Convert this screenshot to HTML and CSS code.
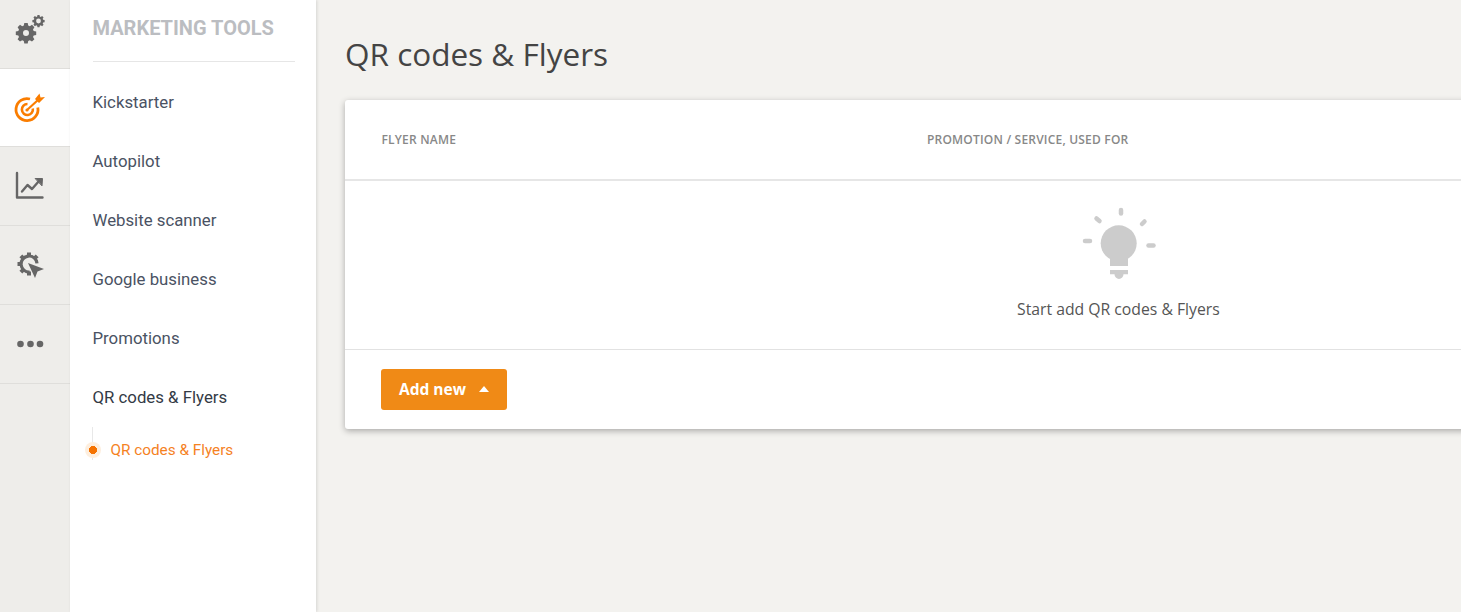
FILE: index.html
```html
<!DOCTYPE html>
<html lang="en">
<head>
<meta charset="utf-8">
<title>QR codes &amp; Flyers</title>
<link rel="stylesheet" href="styles.css">
</head>
<body>
<div class="app">
  <nav class="rail">
    <a class="rail-item rail-first">
      <svg class="icon" width="32" height="32" viewBox="0 0 32 32" fill="#666">
        <g transform="translate(12 15)">
          <path fill-rule="evenodd" d="M-1.7-10h3.4l.5 2.5 1.6.7 2.2-1.4 2.4 2.4-1.4 2.2.7 1.6 2.5.5v3.4l-2.5.5-.7 1.6 1.4 2.2-2.4 2.4-2.2-1.4-1.6.7-.5 2.5h-3.4l-.5-2.5-1.6-.7-2.2 1.4-2.4-2.4 1.4-2.2-.7-1.6-2.5-.5v-3.4l2.5-.5.7-1.6-1.4-2.2 2.4-2.400 2.200 1.400 1.600-.7zM0-3a3 3 0 1 0 0 6 3 3 0 0 0 0-6z"/>
        </g>
        <g transform="translate(24.500 3) scale(.6)">
          <path fill-rule="evenodd" d="M-1.7-10h3.4l.5 2.5 1.6.7 2.2-1.4 2.4 2.4-1.4 2.2.7 1.6 2.5.5v3.4l-2.5.5-.7 1.6 1.4 2.2-2.4 2.4-2.2-1.4-1.6.7-.5 2.5h-3.4l-.5-2.5-1.6-.7-2.2 1.4-2.4-2.4 1.4-2.2-.7-1.6-2.5-.5v-3.4l2.5-.5.7-1.6-1.4-2.2 2.4-2.400 2.200 1.400 1.600-.7zM0-4a4 4 0 1 0 0 8 4 4 0 0 0 0-8z"/>
        </g>
      </svg>
    </a>
    <a class="rail-item rail-active">
      <svg class="icon" width="32" height="32" viewBox="0 0 32 32" fill="none" stroke="#fa7d00">
        <path stroke-width="2.800" d="M23.800 15.500A11 11 0 1 1 16 7"/>
        <path stroke-width="2.600" d="M18.800 16.500A5.500 5.500 0 1 1 13.500 12"/>
        <path stroke-width="2.200" d="M13 18 24 8"/>
        <path fill="#fa7d00" stroke="none" d="M21 7 25.500 1.500 26.500 5.500 31 5 25 11z"/>
        <circle cx="13" cy="18" r="1.600" fill="#fa7d00" stroke="none"/>
      </svg>
    </a>
    <a class="rail-item">
      <svg class="icon" width="32" height="32" viewBox="0 0 32 32" fill="none" stroke="#666" stroke-width="2.400" stroke-linecap="round" stroke-linejoin="round">
        <path d="M3 3v24.500H28.500"/>
        <path d="M8 21.500 13.500 15l4.500 4L25 11"/>
        <path fill="#666" stroke-width="1" d="M21.500 8.500h7l-.5 7z"/>
      </svg>
    </a>
    <a class="rail-item">
      <svg class="icon" width="32" height="32" viewBox="0 0 32 32" fill="#666">
        <path d="M15.700 23A8 8 0 1 1 23 14.300" fill="none" stroke="#666" stroke-width="3.200"/>
        <rect x="13" y="3.500" width="4" height="4"/>
        <rect x="13" y="3.500" width="4" height="4" transform="rotate(45 15 15)"/>
        <rect x="13" y="3.500" width="4" height="4" transform="rotate(-45 15 15)"/>
        <rect x="13" y="3.500" width="4" height="4" transform="rotate(-90 15 15)"/>
        <rect x="13" y="3.500" width="4" height="4" transform="rotate(-135 15 15)"/>
        <rect x="13" y="3.500" width="4" height="4" transform="rotate(180 15 15)"/>
        <path d="M14 14 30 20 23.500 22.500 21 29z"/>
      </svg>
    </a>
    <a class="rail-item">
      <svg class="icon" width="28" height="8" viewBox="0 0 28 8" fill="#666">
        <circle cx="4.500" cy="4" r="3.300"/>
        <circle cx="14.500" cy="4" r="3.300"/>
        <circle cx="24" cy="4" r="3.300"/>
      </svg>
    </a>
  </nav>
  <aside class="sidebar">
    <h2 class="side-title">MARKETING TOOLS</h2>
    <ul class="side-list">
      <li class="side-link">Kickstarter</li>
      <li class="side-link">Autopilot</li>
      <li class="side-link">Website scanner</li>
      <li class="side-link">Google business</li>
      <li class="side-link">Promotions</li>
      <li class="side-link side-open">QR codes &amp; Flyers</li>
    </ul>
    <div class="sub-item">
      <span class="sub-line"></span>
      <span class="sub-dot"></span>
      <span>QR codes &amp; Flyers</span>
    </div>
  </aside>
  <main class="main">
    <h1 class="page-title">QR codes &amp; Flyers</h1>
    <section class="card">
      <div class="card-head">
        <div class="col-a">FLYER NAME</div>
        <div class="col-b">PROMOTION / SERVICE, USED FOR</div>
      </div>
      <div class="empty">
        <svg class="bulb" width="74" height="74" viewBox="0 0 74 74" fill="#ccc">
          <circle cx="36.700" cy="36.300" r="18"/>
          <path d="M28 46h18v13H28z"/>
          <path d="M28 63h18v4.300h-4.500a4.500 4.700 0 0 1-9 0H28z"/>
          <g stroke="#ccc" stroke-width="4.500" stroke-linecap="round">
            <path d="M39 3v3.500"/>
            <path d="M14.500 11.500l3 2.500"/>
            <path d="M60 17l2.500-2.500"/>
            <path d="M3 34h5"/>
            <path d="M66.500 38.500h5"/>
          </g>
        </svg>
        <p class="empty-text">Start add QR codes &amp; Flyers</p>
      </div>
      <div class="card-foot">
        <button class="add-btn">Add new<span class="caret"></span></button>
      </div>
    </section>
  </main>
</div>
</body>
</html>
```

FILE: styles.css
```css
* { box-sizing: border-box; }
html, body { margin: 0; height: 100%; overflow: hidden; }
body { background: #f3f2ef; font-family: "Open Sans", sans-serif; }
.app { display: flex; height: 612px; width: 1461px; overflow: hidden; }

.rail { width: 70px; flex: none; background: #eeedea; display: flex; flex-direction: column; }
.rail-item { height: 79px; display: flex; align-items: center; justify-content: center; padding-right: 10px; border-bottom: 1px solid #dfdedb; }
.icon { overflow: visible; }
.rail-first { height: 69px; }
.rail-active { height: 78px; background: #fff; }

.sidebar { width: 246px; flex: none; background: #fff; padding: 0 21px 0 22.500px; box-shadow: 1px 0 3px rgba(0,0,0,.12); font-family: Roboto, sans-serif; z-index: 1; }
.side-title { margin: 0; height: 62px; padding-top: 16px; font-size: 20px; line-height: 24px; font-weight: 700; color: #bbbdc1; border-bottom: 1px solid #e6e6e6; }
.side-list { list-style: none; margin: 0; padding: 11px 0 0; }
.side-link { height: 59px; font-size: 16.800px; line-height: 59px; color: #4a5263; }
.side-open { color: #333a45; }
.sub-item { position: relative; display: flex; align-items: center; height: 24px; margin-top: 11px; padding-left: 18px; font-size: 15.300px; color: #f5821f; }
.sub-line { position: absolute; left: -.5px; top: -11px; width: 1px; height: 33px; background: #e8e8e8; }
.sub-dot { position: absolute; left: -7.500px; top: 3.500px; width: 16px; height: 16px; border-radius: 50%; background: radial-gradient(circle, #f57200 0 3.800px, #fdeede 4.300px); }

.main { flex: 1; min-width: 0; padding: 0 0 0 29px; }
.page-title { margin: 0; height: 100px; padding-top: 32px; font-size: 31.500px; line-height: 43px; font-weight: 400; color: #444; }
.card { width: 1200px; background: #fff; border-radius: 3px; box-shadow: 0 2px 6px rgba(0,0,0,.3); }
.card-head { height: 81px; display: flex; align-items: center; padding: 0 0 0 36.500px; border-bottom: 2px solid #e6e6e6; font-size: 12px; font-weight: 600; color: #888; letter-spacing: .2px; }
.col-a { width: 545.500px; }
.empty { height: 169px; border-bottom: 1px solid #e2e2e2; padding: 26px 0 0 737px; position: relative; }
.bulb { display: block; }
.empty-text { position: absolute; margin: 0; left: 672px; top: 117px; font-size: 15.750px; line-height: 22px; color: #555; white-space: nowrap; }
.card-foot { height: 79px; padding: 19px 0 0 36px; }
.add-btn { height: 41px; width: 126px; display: flex; align-items: center; padding: 0 0 2px 18px; border: 0; border-radius: 3px; background: #f08a16; color: #fff; font-family: "Open Sans", sans-serif; font-size: 15.500px; font-weight: 700; }
.caret { width: 0; height: 0; margin-left: 13px; border-left: 5.500px solid transparent; border-right: 5.500px solid transparent; border-bottom: 6px solid #fff; }
```
